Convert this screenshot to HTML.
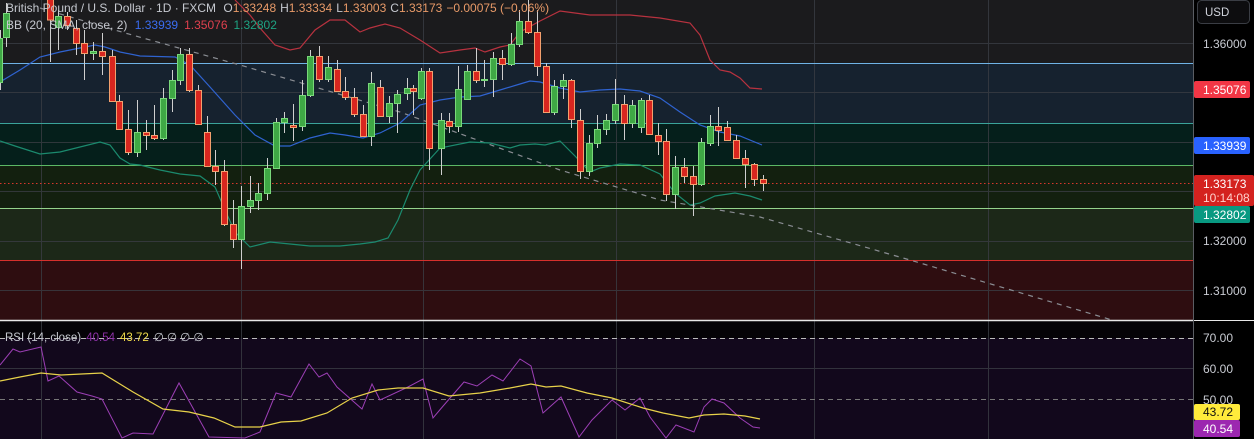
<!DOCTYPE html>
<html><head><meta charset="utf-8"><style>
html,body{margin:0;padding:0;background:#000;width:1254px;height:439px;overflow:hidden}
svg{display:block}
text{font-family:"Liberation Sans",sans-serif}
.w{stroke:#cfcfcf;stroke-width:1}
.g{fill:#3fa845;stroke:#79d87a;stroke-width:1}
.r{fill:#d8261f;stroke:#f3a06e;stroke-width:1}
</style></head><body>
<svg width="1254" height="439" viewBox="0 0 1254 439" xmlns="http://www.w3.org/2000/svg">
<!-- bands -->
<rect x="0" y="0" width="1193" height="63" fill="#1b1b1d"/>
<rect x="0" y="63" width="1193" height="60" fill="#16222f"/>
<rect x="0" y="123" width="1193" height="42" fill="#051f1b"/>
<rect x="0" y="165" width="1193" height="43" fill="#13200f"/>
<rect x="0" y="208" width="1193" height="52" fill="#1c2818"/>
<rect x="0" y="260" width="1193" height="60" fill="#2e0d10"/>
<!-- rsi pane -->
<rect x="0" y="321" width="1193" height="17" fill="#050307"/>
<rect x="0" y="338" width="1193" height="101" fill="#12081c"/>
<!-- grid -->
<g stroke="#3a3d44" stroke-width="1" opacity="0.8">
<line x1="0" x2="1193" y1="43.5" y2="43.5"/><line x1="0" x2="1193" y1="92.5" y2="92.5"/>
<line x1="0" x2="1193" y1="142.5" y2="142.5"/><line x1="0" x2="1193" y1="191.5" y2="191.5"/>
<line x1="0" x2="1193" y1="241.5" y2="241.5"/><line x1="0" x2="1193" y1="290.5" y2="290.5"/>
<line x1="0" x2="1193" y1="368.5" y2="368.5"/>
<line x1="41.5" x2="41.5" y1="0" y2="439"/><line x1="241.5" x2="241.5" y1="0" y2="439"/>
<line x1="423.5" x2="423.5" y1="0" y2="439"/><line x1="616.5" x2="616.5" y1="0" y2="439"/>
<line x1="814.5" x2="814.5" y1="0" y2="439"/><line x1="988.5" x2="988.5" y1="0" y2="439"/>
</g>
<!-- horizontal level lines -->
<line x1="0" x2="1193" y1="63.5" y2="63.5" stroke="#6fb3e6"/>
<line x1="0" x2="1193" y1="123.5" y2="123.5" stroke="#3aa39a"/>
<line x1="0" x2="1193" y1="165.5" y2="165.5" stroke="#5cb865"/>
<line x1="0" x2="1193" y1="208.5" y2="208.5" stroke="#94d48c"/>
<line x1="0" x2="1193" y1="260.5" y2="260.5" stroke="#d6302c"/>
<line x1="0" x2="1193" y1="183.5" y2="183.5" stroke="#d8382c" stroke-dasharray="1.5,2.5"/>
<!-- rsi levels -->
<line x1="0" x2="1193" y1="338.5" y2="338.5" stroke="#bbb" stroke-dasharray="5,4"/>
<line x1="0" x2="1193" y1="399.5" y2="399.5" stroke="#777" stroke-dasharray="5,4"/>
<!-- trend dashed -->
<polyline points="40,8 125,33 240,65 400,112 560,170 660,200 760,217 910,260 1112,320" fill="none" stroke="#8a8d93" stroke-width="1.2" stroke-dasharray="5,5"/>
<!-- BB -->
<polyline fill="none" stroke="#b8323f" stroke-width="1.2" points="235,0 250,15 260,28 275,45 290,50 300,48 315,30 330,20 345,20 360,32 370,28 385,24 400,28 420,40 440,53 460,50 475,48 485,52 500,47 510,45 520,32 540,21 560,11 590,15 630,15 660,18 690,23 700,35 710,60 720,70 730,72 740,78 750,88 762,89"/>
<polyline fill="none" stroke="#2f63d0" stroke-width="1.2" points="0,82 20,70 40,57 60,52 80,48 95,45 105,47 120,52 140,56 175,57 190,65 210,87 235,115 255,135 275,146 290,146 310,138 330,133 345,135 363,138 380,133 400,123 420,105 440,100 460,97 480,96 500,90 520,84 530,81 540,82 560,88 580,92 600,90 620,89 640,91 660,98 680,112 700,125 720,132 740,136 762,145"/>
<polyline fill="none" stroke="#1b8a6e" stroke-width="1.2" points="0,141 15,146 40,154 60,152 80,147 100,142 110,145 120,158 130,164 140,165 160,170 180,174 200,176 215,187 225,210 235,232 250,247 270,242 290,244 310,246 340,246 360,244 375,242 388,238 398,220 410,190 420,170 440,148 470,142 490,143 510,148 520,145 535,144 545,145 560,141 575,156 590,172 600,168 620,164 640,165 660,174 675,193 690,205 700,203 715,196 735,193 750,196 762,200"/>
<!-- candles -->
<g id="c">
<line class="w" x1="0.5" x2="0.5" y1="30" y2="90"/><rect class="g" x="-2.5" y="38.5" width="5" height="44"/>
<line class="w" x1="6.5" x2="6.5" y1="3" y2="47"/><rect class="g" x="3.5" y="13.5" width="6" height="24"/>
<line class="w" x1="50.5" x2="50.5" y1="0" y2="62"/><rect class="r" x="47.5" y="-1" width="6" height="21"/>
<line class="w" x1="58.5" x2="58.5" y1="10" y2="50"/><rect class="g" x="55.5" y="16.5" width="6" height="11"/>
<line class="w" x1="67.5" x2="67.5" y1="12" y2="30"/><rect class="r" x="64.5" y="16.5" width="6" height="9"/>
<line class="w" x1="76.5" x2="76.5" y1="20" y2="55"/><rect class="r" x="73.5" y="28.5" width="6" height="15"/>
<line class="w" x1="84.5" x2="84.5" y1="30" y2="80"/><rect class="r" x="81.5" y="43.5" width="6" height="10"/>
<line class="w" x1="93.5" x2="93.5" y1="42" y2="60"/><rect class="g" x="90.5" y="51.5" width="6" height="2"/>
<line class="w" x1="102.5" x2="102.5" y1="33" y2="75"/><rect class="r" x="99.5" y="51.5" width="6" height="5"/>
<line class="w" x1="112.5" x2="112.5" y1="50" y2="101"/><rect class="r" x="109.5" y="56.5" width="6" height="45"/>
<line class="w" x1="119.5" x2="119.5" y1="95" y2="129"/><rect class="r" x="116.5" y="101.5" width="6" height="28"/>
<line class="w" x1="128.5" x2="128.5" y1="110" y2="155"/><rect class="r" x="125.5" y="129.5" width="6" height="23"/>
<line class="w" x1="137.5" x2="137.5" y1="100" y2="157"/><rect class="g" x="134.5" y="132.5" width="6" height="20"/>
<line class="w" x1="146.5" x2="146.5" y1="120" y2="150"/><rect class="r" x="143.5" y="132.5" width="6" height="3"/>
<line class="w" x1="154.5" x2="154.5" y1="105" y2="140"/><rect class="r" x="151.5" y="135.5" width="6" height="3"/>
<line class="w" x1="163.5" x2="163.5" y1="88" y2="140"/><rect class="g" x="160.5" y="98.5" width="6" height="40"/>
<line class="w" x1="172.5" x2="172.5" y1="70" y2="112"/><rect class="g" x="169.5" y="80.5" width="6" height="18"/>
<line class="w" x1="180.5" x2="180.5" y1="48" y2="85"/><rect class="g" x="177.5" y="54.5" width="6" height="26"/>
<line class="w" x1="189.5" x2="189.5" y1="48" y2="92"/><rect class="r" x="186.5" y="54.5" width="6" height="36"/>
<line class="w" x1="198.5" x2="198.5" y1="85" y2="124"/><rect class="r" x="195.5" y="90.5" width="6" height="34"/>
<line class="w" x1="207.5" x2="207.5" y1="116" y2="166"/><rect class="r" x="204.5" y="132.5" width="6" height="34"/>
<line class="w" x1="215.5" x2="215.5" y1="150" y2="185"/><rect class="r" x="212.5" y="166.5" width="6" height="5"/>
<line class="w" x1="224.5" x2="224.5" y1="160" y2="226"/><rect class="r" x="221.5" y="171.5" width="6" height="53"/>
<line class="w" x1="233.5" x2="233.5" y1="200" y2="248"/><rect class="r" x="230.5" y="224.5" width="6" height="15"/>
<line class="w" x1="241.5" x2="241.5" y1="186" y2="269"/><rect class="g" x="238.5" y="206.5" width="6" height="33"/>
<line class="w" x1="250.5" x2="250.5" y1="176" y2="213"/><rect class="g" x="247.5" y="200.5" width="6" height="6"/>
<line class="w" x1="258.5" x2="258.5" y1="183" y2="210"/><rect class="g" x="255.5" y="193.5" width="6" height="7"/>
<line class="w" x1="267.5" x2="267.5" y1="158" y2="200"/><rect class="g" x="264.5" y="168.5" width="6" height="25"/>
<line class="w" x1="276.5" x2="276.5" y1="118" y2="168"/><rect class="g" x="273.5" y="122.5" width="6" height="46"/>
<line class="w" x1="284.5" x2="284.5" y1="112" y2="133"/><rect class="g" x="281.5" y="118.5" width="6" height="4"/>
<line class="w" x1="293.5" x2="293.5" y1="104" y2="141"/><rect class="r" x="290.5" y="125.5" width="6" height="2"/>
<line class="w" x1="302.5" x2="302.5" y1="80" y2="131"/><rect class="g" x="299.5" y="95.5" width="6" height="31"/>
<line class="w" x1="310.5" x2="310.5" y1="50" y2="97"/><rect class="g" x="307.5" y="56.5" width="6" height="39"/>
<line class="w" x1="319.5" x2="319.5" y1="46" y2="82"/><rect class="r" x="316.5" y="56.5" width="6" height="23"/>
<line class="w" x1="328.5" x2="328.5" y1="56" y2="82"/><rect class="g" x="325.5" y="67.5" width="6" height="12"/>
<line class="w" x1="337.5" x2="337.5" y1="60" y2="91"/><rect class="r" x="334.5" y="69.5" width="6" height="22"/>
<line class="w" x1="345.5" x2="345.5" y1="77" y2="100"/><rect class="r" x="342.5" y="91.5" width="6" height="6"/>
<line class="w" x1="354.5" x2="354.5" y1="88" y2="117"/><rect class="r" x="351.5" y="97.5" width="6" height="17"/>
<line class="w" x1="363.5" x2="363.5" y1="105" y2="137"/><rect class="r" x="360.5" y="114.5" width="6" height="22"/>
<line class="w" x1="371.5" x2="371.5" y1="72" y2="146"/><rect class="g" x="368.5" y="83.5" width="6" height="53"/>
<line class="w" x1="380.5" x2="380.5" y1="80" y2="117"/><rect class="r" x="377.5" y="87.5" width="6" height="29"/>
<line class="w" x1="389.5" x2="389.5" y1="96" y2="123"/><rect class="g" x="386.5" y="103.5" width="6" height="13"/>
<line class="w" x1="397.5" x2="397.5" y1="90" y2="133"/><rect class="g" x="394.5" y="94.5" width="6" height="9"/>
<line class="w" x1="407.5" x2="407.5" y1="78" y2="100"/><rect class="g" x="404.5" y="88.5" width="6" height="5"/>
<line class="w" x1="413.5" x2="413.5" y1="85" y2="115"/><rect class="r" x="410.5" y="88.5" width="6" height="3"/>
<line class="w" x1="421.5" x2="421.5" y1="68" y2="100"/><rect class="g" x="418.5" y="71.5" width="6" height="27"/>
<line class="w" x1="429.5" x2="429.5" y1="68" y2="170"/><rect class="r" x="426.5" y="71.5" width="6" height="77"/>
<line class="w" x1="441.5" x2="441.5" y1="113" y2="175"/><rect class="g" x="438.5" y="120.5" width="6" height="28"/>
<line class="w" x1="449.5" x2="449.5" y1="113" y2="133"/><rect class="r" x="446.5" y="121.5" width="6" height="5"/>
<line class="w" x1="458.5" x2="458.5" y1="66" y2="132"/><rect class="g" x="455.5" y="89.5" width="6" height="37"/>
<line class="w" x1="467.5" x2="467.5" y1="65" y2="100"/><rect class="g" x="464.5" y="71.5" width="6" height="28"/>
<line class="w" x1="476.5" x2="476.5" y1="48" y2="83"/><rect class="r" x="473.5" y="71.5" width="6" height="9"/>
<line class="w" x1="484.5" x2="484.5" y1="60" y2="87"/><rect class="g" x="481.5" y="79.5" width="6" height="1"/>
<line class="w" x1="493.5" x2="493.5" y1="52" y2="97"/><rect class="g" x="490.5" y="58.5" width="6" height="21"/>
<line class="w" x1="502.5" x2="502.5" y1="50" y2="80"/><rect class="r" x="499.5" y="58.5" width="6" height="6"/>
<line class="w" x1="511.5" x2="511.5" y1="33" y2="66"/><rect class="g" x="508.5" y="44.5" width="6" height="20"/>
<line class="w" x1="519.5" x2="519.5" y1="10" y2="47"/><rect class="g" x="516.5" y="21.5" width="6" height="23"/>
<line class="w" x1="528.5" x2="528.5" y1="0" y2="34"/><rect class="r" x="525.5" y="21.5" width="6" height="11"/>
<line class="w" x1="537.5" x2="537.5" y1="10" y2="76"/><rect class="r" x="534.5" y="32.5" width="6" height="34"/>
<line class="w" x1="546.5" x2="546.5" y1="63" y2="112"/><rect class="r" x="543.5" y="66.5" width="6" height="46"/>
<line class="w" x1="554.5" x2="554.5" y1="80" y2="115"/><rect class="g" x="551.5" y="86.5" width="6" height="26"/>
<line class="w" x1="563.5" x2="563.5" y1="74" y2="99"/><rect class="g" x="560.5" y="80.5" width="6" height="6"/>
<line class="w" x1="571.5" x2="571.5" y1="79" y2="128"/><rect class="r" x="568.5" y="80.5" width="6" height="39"/>
<line class="w" x1="580.5" x2="580.5" y1="109" y2="179"/><rect class="r" x="577.5" y="120.5" width="6" height="51"/>
<line class="w" x1="589.5" x2="589.5" y1="135" y2="176"/><rect class="g" x="586.5" y="143.5" width="6" height="28"/>
<line class="w" x1="597.5" x2="597.5" y1="115" y2="148"/><rect class="g" x="594.5" y="129.5" width="6" height="14"/>
<line class="w" x1="606.5" x2="606.5" y1="114" y2="135"/><rect class="g" x="603.5" y="120.5" width="6" height="9"/>
<line class="w" x1="615.5" x2="615.5" y1="79" y2="124"/><rect class="g" x="612.5" y="104.5" width="6" height="16"/>
<line class="w" x1="624.5" x2="624.5" y1="95" y2="140"/><rect class="r" x="621.5" y="104.5" width="6" height="19"/>
<line class="w" x1="632.5" x2="632.5" y1="100" y2="128"/><rect class="g" x="629.5" y="105.5" width="6" height="18"/>
<line class="w" x1="641.5" x2="641.5" y1="98" y2="133"/><rect class="g" x="638.5" y="100.5" width="6" height="27"/>
<line class="w" x1="649.5" x2="649.5" y1="95" y2="134"/><rect class="r" x="646.5" y="100.5" width="6" height="34"/>
<line class="w" x1="658.5" x2="658.5" y1="123" y2="155"/><rect class="r" x="655.5" y="135.5" width="6" height="6"/>
<line class="w" x1="666.5" x2="666.5" y1="129" y2="201"/><rect class="r" x="663.5" y="141.5" width="6" height="53"/>
<line class="w" x1="675.5" x2="675.5" y1="156" y2="209"/><rect class="g" x="672.5" y="167.5" width="6" height="27"/>
<line class="w" x1="684.5" x2="684.5" y1="158" y2="183"/><rect class="r" x="681.5" y="167.5" width="6" height="9"/>
<line class="w" x1="693.5" x2="693.5" y1="166" y2="216"/><rect class="r" x="690.5" y="176.5" width="6" height="8"/>
<line class="w" x1="701.5" x2="701.5" y1="138" y2="186"/><rect class="g" x="698.5" y="142.5" width="6" height="42"/>
<line class="w" x1="710.5" x2="710.5" y1="115" y2="146"/><rect class="g" x="707.5" y="126.5" width="6" height="17"/>
<line class="w" x1="718.5" x2="718.5" y1="107" y2="146"/><rect class="r" x="715.5" y="126.5" width="6" height="4"/>
<line class="w" x1="727.5" x2="727.5" y1="121" y2="140"/><rect class="r" x="724.5" y="127.5" width="6" height="13"/>
<line class="w" x1="736.5" x2="736.5" y1="135" y2="158"/><rect class="r" x="733.5" y="140.5" width="6" height="18"/>
<line class="w" x1="745.5" x2="745.5" y1="150" y2="188"/><rect class="r" x="742.5" y="158.5" width="6" height="6"/>
<line class="w" x1="754.5" x2="754.5" y1="163" y2="186"/><rect class="r" x="751.5" y="164.5" width="6" height="15"/>
<line class="w" x1="763.5" x2="763.5" y1="175" y2="191"/><rect class="r" x="760.5" y="179.5" width="6" height="4"/>
</g>
<!-- RSI lines -->
<polyline fill="none" stroke="#9c3fb5" stroke-width="1" points="0,365 13,349 20,352 41,347 48,381 59,376 77,392 92,396 102,399 122,438 133,433 153,434 179,383 209,437 245,438 260,432 276,393 291,397 309,364 319,377 327,373 337,387 362,409 372,384 380,400 408,387 423,379 433,418 444,405 464,382 477,386 492,375 503,381 520,359 531,366 543,413 561,397 579,437 592,420 612,400 625,410 640,398 650,417 666,438 676,425 694,432 704,407 712,399 724,403 740,418 753,427 760,428"/>
<polyline fill="none" stroke="#e8d24a" stroke-width="1.2" points="0,381 20,377 41,373 61,375 102,373 133,392 163,409 189,412 214,418 235,427 260,427 281,422 301,421 327,413 352,398 378,390 398,388 423,388 449,396 480,393 510,388 531,384 546,387 561,386 587,393 612,398 643,408 663,413 689,418 704,415 724,414 745,416 760,419"/>
<!-- separator -->
<line x1="0" x2="1254" y1="320.5" y2="320.5" stroke="#e8e8e8" stroke-width="1.5"/>
<!-- axis -->
<rect x="1193" y="0" width="61" height="320" fill="#000"/>
<rect x="1193" y="321" width="61" height="118" fill="#000"/>
<line x1="1193.5" x2="1193.5" y1="0" y2="439" stroke="#5a5d63"/>
<rect x="1197.5" y="0.5" width="52" height="23" rx="4" fill="#0d0d0f" stroke="#3a3d44"/>
<text x="1205" y="16" font-size="11.5" fill="#d1d4dc">USD</text>
<g font-size="12" fill="#c8cbd2">
<text x="1203" y="48">1.36000</text>
<text x="1203" y="245">1.32000</text>
<text x="1203" y="295">1.31000</text>
<text x="1203" y="342">70.00</text>
<text x="1203" y="373">60.00</text>
<text x="1203" y="404">50.00</text>
</g>
<rect x="1194" y="81" width="56" height="17" rx="2" fill="#f23645"/>
<text x="1203" y="94" font-size="12" fill="#fff">1.35076</text>
<rect x="1194" y="137" width="56" height="17" rx="2" fill="#2962ff"/>
<text x="1203" y="150" font-size="12" fill="#fff">1.33939</text>
<rect x="1194" y="175" width="60" height="31" rx="2" fill="#d4221f"/>
<text x="1203" y="188" font-size="12" fill="#fff">1.33173</text>
<text x="1203" y="202" font-size="12" fill="#ffd0cc">10:14:08</text>
<rect x="1194" y="206" width="56" height="17" rx="2" fill="#089981"/>
<text x="1203" y="219" font-size="12" fill="#fff">1.32802</text>
<rect x="1194" y="404" width="46" height="16" rx="2" fill="#ffeb3b"/>
<text x="1203" y="416" font-size="12" fill="#111">43.72</text>
<rect x="1194" y="420" width="46" height="17" rx="2" fill="#9c27b0"/>
<text x="1203" y="433" font-size="12" fill="#fff">40.54</text>
<!-- legends -->
<g font-size="12">
<text x="6" y="12" fill="#c5c8cf">British Pound / U.S. Dollar · 1D · FXCM <tspan dx="4">O</tspan><tspan fill="#e89a68">1.33248</tspan><tspan dx="4">H</tspan><tspan fill="#e89a68">1.33334</tspan><tspan dx="4">L</tspan><tspan fill="#e89a68">1.33003</tspan><tspan dx="4">C</tspan><tspan fill="#e89a68">1.33173</tspan><tspan dx="4" fill="#e89a68">−0.00075 (−0.06%)</tspan></text>
<text x="6" y="29" fill="#c5c8cf">BB (20, SMA, close, 2) <tspan dx="4" fill="#3a6cf0">1.33939</tspan><tspan dx="6" fill="#e0404e">1.35076</tspan><tspan dx="6" fill="#1ea383">1.32802</tspan></text>
<text x="5" y="341" font-size="11.5" fill="#c5c8cf">RSI (14, close) <tspan dx="2" fill="#8e32a8">40.54</tspan><tspan dx="5" fill="#f0dc4a">43.72</tspan><tspan dx="5">∅ ∅ ∅ ∅</tspan></text>
</g>
</svg>
</body></html>
